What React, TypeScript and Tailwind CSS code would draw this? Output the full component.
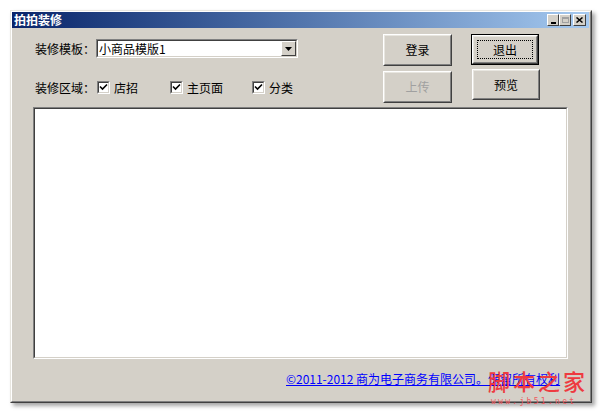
import React from "react";

const font = { fontFamily: '"Noto Sans CJK SC", "Liberation Sans", sans-serif' };

function Btn({ label, disabled, def, cls }: { label: string; disabled?: boolean; def?: boolean; cls: string }) {
  return (
    <div
      className={`${cls} flex items-center justify-center text-[12px] leading-none ${
        def ? "border border-black" : ""
      }`}
    >
      <div className="w-full h-full border border-t-white border-l-white border-b-[#404040] border-r-[#404040] bg-[#d4d0c8] flex items-center justify-center">
        <div className="w-full h-full border border-t-[#e8e6e0] border-l-[#e8e6e0] border-b-[#808080] border-r-[#808080] flex items-center justify-center">
          {def ? (
            <div className="w-[calc(100%-6px)] h-[calc(100%-6px)] border border-dotted border-black flex items-center justify-center">
              {label}
            </div>
          ) : (
            <span className={disabled ? "text-[#a0a0a0]" : "text-black"}>{label}</span>
          )}
        </div>
      </div>
    </div>
  );
}

function Check({ label }: { label: string }) {
  return (
    <div className="flex items-center gap-[4px]">
      <div className="w-[13px] h-[13px] bg-white border border-t-[#808080] border-l-[#808080] border-b-white border-r-white">
        <div className="w-full h-full border border-t-[#404040] border-l-[#404040] border-b-[#d4d0c8] border-r-[#d4d0c8] flex items-center justify-center">
          <svg width="9" height="9" viewBox="0 0 9 9">
            <path d="M1 3.5 L3.5 6 L8 1.5" stroke="black" strokeWidth="1.6" fill="none" />
          </svg>
        </div>
      </div>
      <span className="text-[12px] leading-none text-black">{label}</span>
    </div>
  );
}

export default function App() {
  return (
    <div className="relative w-[600px] h-[412px] bg-white overflow-hidden" style={font}>
      <div className="ml-[10px] mt-[10px] w-[582px] h-[393px] flex flex-col bg-[#d4d0c8] border border-t-[#e8e6e0] border-l-[#e8e6e0] border-r-[#404040] border-b-[#404040] shadow-[3px_3px_4px_rgba(0,0,0,0.35)]">
        <div className="flex flex-col flex-1 border border-t-white border-l-white border-r-[#808080] border-b-[#808080]">
          {/* title bar */}
          <div className="h-[16px] flex items-center justify-between bg-gradient-to-r from-[#0a246a] to-[#a6caf0] pl-[2px] pr-[3px] mr-[1px]">
            <span className="text-white font-bold text-[12px] leading-none">拍拍装修</span>
            <div className="flex items-center">
              <div className="w-[12px] h-[12px] bg-[#d4d0c8] border border-t-white border-l-white border-b-[#404040] border-r-[#404040] flex items-end justify-center pb-[1px]">
                <div className="w-[5px] h-[2px] bg-black" />
              </div>
              <div className="w-[12px] h-[12px] bg-[#d4d0c8] border border-t-white border-l-white border-b-[#404040] border-r-[#404040] flex items-center justify-center">
                <div className="w-[7px] h-[6px] border border-[#a0a0a0] border-t-2" />
              </div>
              <div className="ml-[2px] w-[13px] h-[12px] bg-[#d4d0c8] border border-t-white border-l-white border-b-[#404040] border-r-[#404040] flex items-center justify-center">
                <svg width="7" height="6" viewBox="0 0 7 6">
                  <path d="M0.5 0.5 L6.5 5.5 M6.5 0.5 L0.5 5.5" stroke="black" strokeWidth="1.5" />
                </svg>
              </div>
            </div>
          </div>

          {/* top controls */}
          <div className="flex h-[79px]">
            <div className="flex flex-col pl-[23px] pt-[11px] w-[371px]">
              <div className="flex items-center h-[19px]">
                <span className="text-[12px] leading-none w-[61px] text-black">装修模板：</span>
                <div className="w-[202px] h-[19px] bg-white border border-t-[#808080] border-l-[#808080] border-b-white border-r-white">
                  <div className="w-full h-full border border-t-[#404040] border-l-[#404040] border-b-[#d4d0c8] border-r-[#d4d0c8] flex items-center">
                    <span className="flex-1 text-[12px] leading-none pl-[1px] text-black">小商品模版1</span>
                    <div className="w-[15px] h-[15px] bg-[#d4d0c8] border border-t-white border-l-white border-b-[#404040] border-r-[#404040] flex items-center justify-center">
                      <svg width="7" height="4" viewBox="0 0 7 4">
                        <path d="M0 0 H7 L3.5 4 Z" fill="black" />
                      </svg>
                    </div>
                  </div>
                </div>
              </div>
              <div className="flex items-center mt-[23px] h-[13px]">
                <span className="text-[12px] leading-none w-[62px] text-black">装修区域：</span>
                <div className="w-[73px]"><Check label="店招" /></div>
                <div className="w-[82px]"><Check label="主页面" /></div>
                <Check label="分类" />
              </div>
            </div>
            <div className="flex gap-[19px] pt-[6px]">
              <div className="flex flex-col gap-[5px]">
                <Btn label="登录" cls="w-[69px] h-[32px]" />
                <Btn label="上传" disabled cls="w-[69px] h-[32px]" />
              </div>
              <div className="flex flex-col gap-[4px]">
                <Btn label="退出" def cls="w-[68px] h-[31px]" />
                <Btn label="预览" cls="w-[68px] h-[31px] ml-[1px]" />
              </div>
            </div>
          </div>

          {/* white area */}
          <div className="ml-[21px] w-[535px] h-[252px] border border-t-[#808080] border-l-[#808080] border-b-white border-r-white">
            <div className="w-full h-full bg-white border border-t-[#404040] border-l-[#404040] border-b-[#d4d0c8] border-r-[#d4d0c8]" />
          </div>

          {/* footer */}
          <div className="flex pl-[274px] pt-[14px]">
            <span className="text-[12px] leading-none text-[#0000ff] underline whitespace-nowrap">©2011-2012 商为电子商务有限公司。保留所有权利</span>
          </div>
        </div>
      </div>

      {/* watermark */}
      <div className="absolute left-[488px] top-[369px] w-[104px] flex flex-col items-start">
        <span
          className="text-[22px] leading-none text-[#ee3a40] tracking-[3px] whitespace-nowrap"
          style={{ fontFamily: '"Noto Sans CJK SC", sans-serif', fontWeight: 500 }}
        >
          脚本之家
        </span>
        <span
          className="text-[8px] leading-none text-[#ee5a60] tracking-[2.3px] mt-[7px] ml-[3px] whitespace-nowrap"
          style={{ fontFamily: '"DejaVu Sans Mono", monospace' }}
        >
          www.jb51.net
        </span>
      </div>
    </div>
  );
}
